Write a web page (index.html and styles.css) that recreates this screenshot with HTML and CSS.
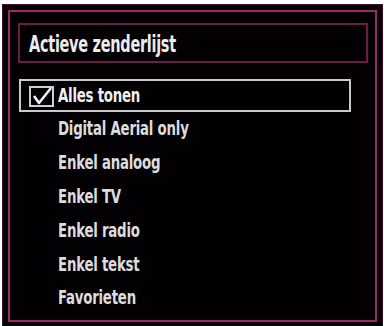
FILE: index.html
```html
<!DOCTYPE html>
<html>
<head>
<meta charset="utf-8">
<link rel="stylesheet" href="styles.css">
</head>
<body>
<div class="panel">
  <div class="frame">
    <div class="title"><span class="title-text">Actieve zenderlijst</span></div>
    <ul class="list">
      <li class="row selected">
        <span class="check">
          <svg width="26" height="22" viewBox="0 0 26 22">
            <rect x="1" y="2" width="23" height="19" fill="none" stroke="#cfcfcf" stroke-width="2"/>
            <polyline points="5,11 10,18 22,3" fill="none" stroke="#f2f2f2" stroke-width="2.6" stroke-linejoin="round"/>
          </svg>
        </span>
        <span class="label">Alles tonen</span>
      </li>
      <li class="row"><span class="check"></span><span class="label">Digital Aerial only</span></li>
      <li class="row"><span class="check"></span><span class="label">Enkel analoog</span></li>
      <li class="row"><span class="check"></span><span class="label">Enkel TV</span></li>
      <li class="row"><span class="check"></span><span class="label">Enkel radio</span></li>
      <li class="row"><span class="check"></span><span class="label">Enkel tekst</span></li>
      <li class="row"><span class="check"></span><span class="label">Favorieten</span></li>
    </ul>
  </div>
</div>
</body>
</html>
```
FILE: styles.css
```css
html, body {
  margin: 0;
  padding: 0;
  background: #ffffff;
}
body {
  width: 384px;
  height: 326px;
  overflow: hidden;
  font-family: "DejaVu Sans Condensed", "DejaVu Sans", sans-serif;
}
.panel {
  box-sizing: border-box;
  margin: 4px 0 0 2px;
  width: 381px;
  height: 324px;
  background: #030003;
  border: 1px solid #3c0c28;
  padding: 5px;
}
.frame {
  box-sizing: border-box;
  height: 100%;
  border: 2px solid #9a2a68;
  padding: 11px 7px 0 8px;
}
.title {
  box-sizing: border-box;
  height: 40px;
  border: 2px solid #6a1e44;
  display: flex;
  align-items: center;
  padding-left: 9px;
}
.title-text {
  display: inline-block;
  color: #ececec;
  font-size: 23px;
  font-weight: bold;
  letter-spacing: -0.4px;
  white-space: nowrap;
  transform: scaleX(0.7);
  transform-origin: left center;
  margin-top: 2px;
}
.list {
  list-style: none;
  margin: 16px 0 0 1px;
  padding: 0;
  width: 332px;
}
.row {
  box-sizing: border-box;
  height: 33.8px;
  display: flex;
  align-items: center;
  padding-left: 8px;
  border: 2px solid transparent;
}
.row.selected {
  border-color: #c9c9c9;
  height: 33px;
}
.check {
  display: inline-flex;
  width: 26px;
  height: 22px;
  margin-right: 3px;
  flex: none;
}
.label {
  display: inline-block;
  color: #dcdcdc;
  font-size: 19.5px;
  font-weight: bold;
  letter-spacing: -0.3px;
  white-space: nowrap;
  transform: scaleX(0.76);
  transform-origin: left center;
}
.selected .label {
  color: #f0f0f0;
}
```
